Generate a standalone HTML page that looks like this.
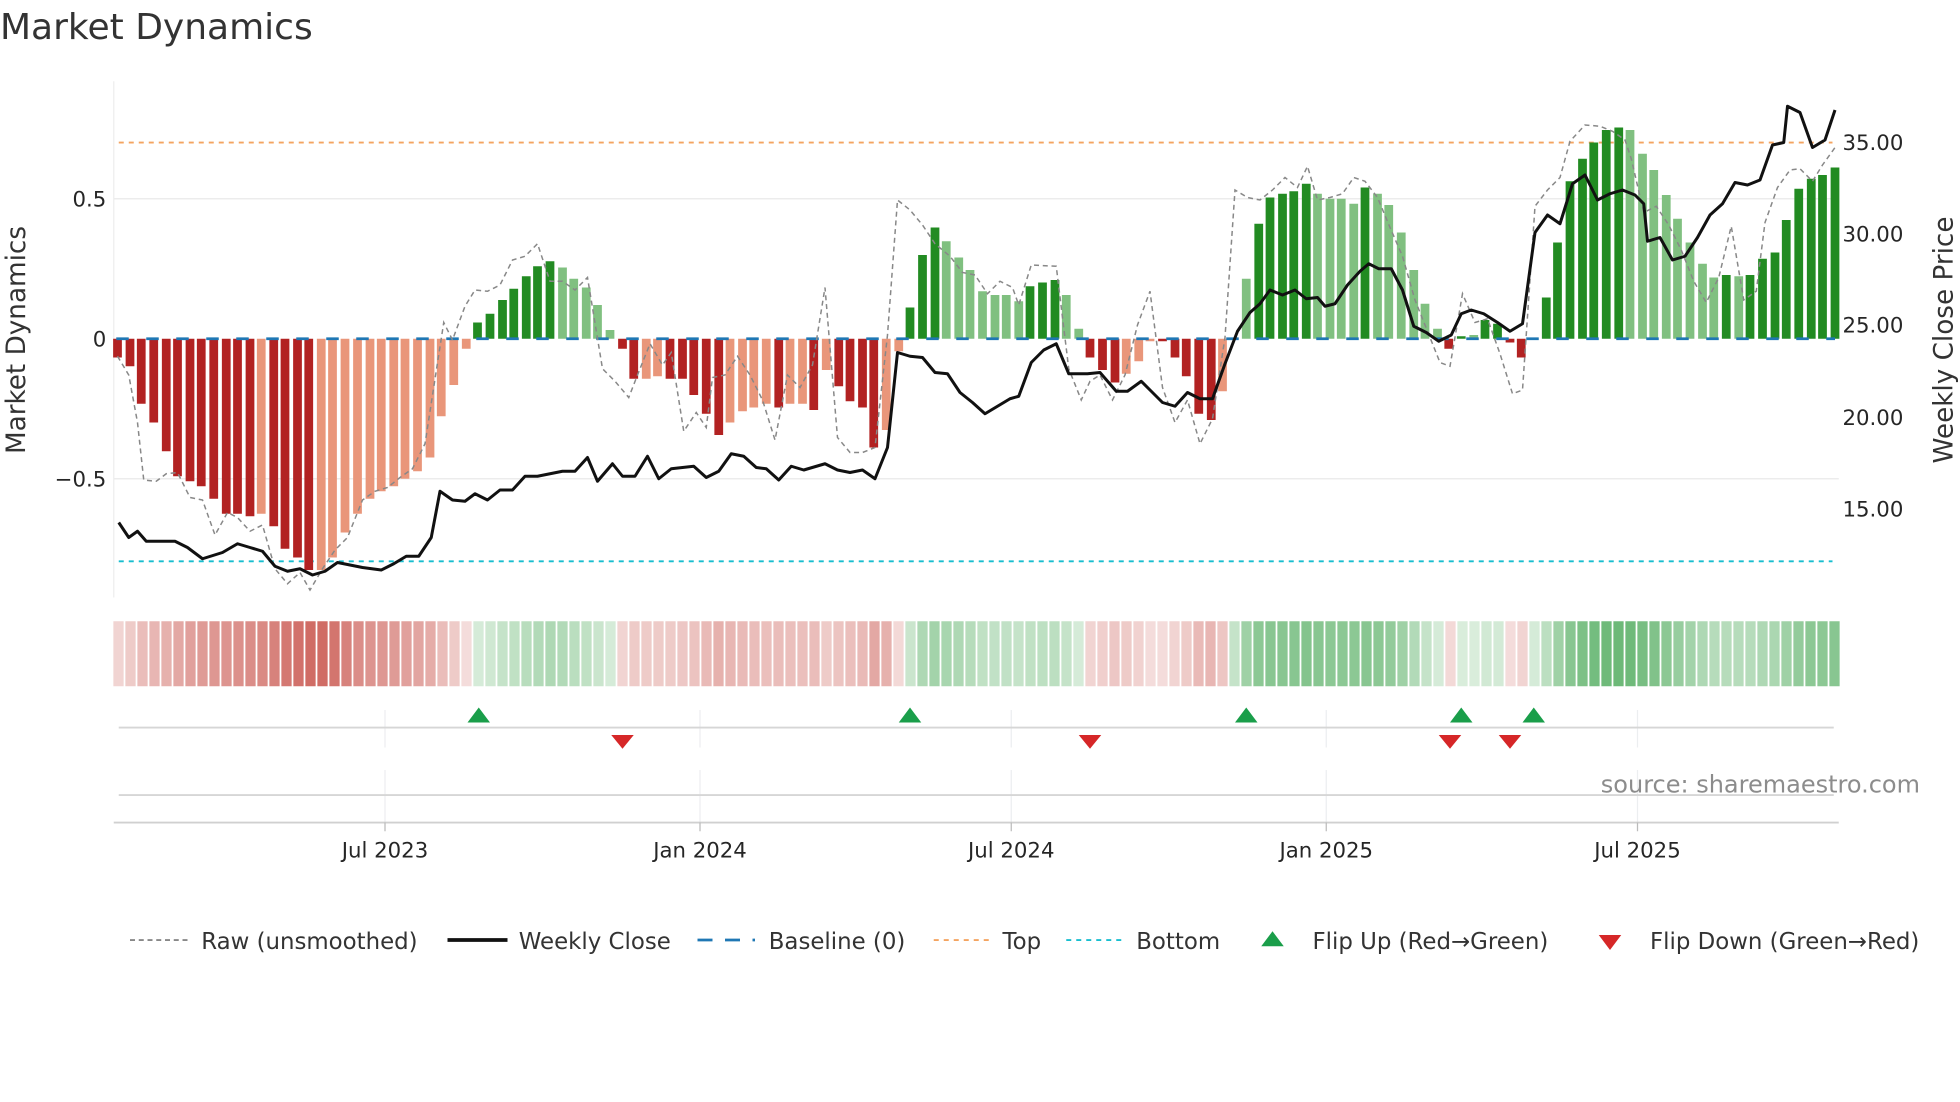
<!DOCTYPE html>
<html><head><meta charset="utf-8"><style>
html,body{margin:0;padding:0;background:#fff;}
svg{display:block;font-family:"DejaVu Sans","Liberation Sans",sans-serif;}
.dr{fill:#b22222}.lr{fill:#e9967a}.dg{fill:#228b22}.lg{fill:#80c080}
.hr{fill:#c8524a}.hg{fill:#3fa34d}
.t{fill:#262626;font-size:17px}
</style></head><body>
<svg width="1960" height="1102" viewBox="0 0 1568 881.6" xmlns="http://www.w3.org/2000/svg">
<text x="0" y="31" style="font-size:28.8px;fill:#333">Market Dynamics</text>
<line x1="91" y1="65" x2="91" y2="478" stroke="#eee" stroke-width="1"/>
<line x1="91" y1="159" x2="1471" y2="159" stroke="#ececec" stroke-width="1.2"/>
<line x1="91" y1="383" x2="1471" y2="383" stroke="#ececec" stroke-width="1.2"/>
<text class="t" x="85" y="165" text-anchor="end">0.5</text>
<text class="t" x="85" y="277" text-anchor="end">0</text>
<text class="t" x="85" y="389" text-anchor="end">−0.5</text>
<text class="t" x="1474" y="120">35.00</text>
<text class="t" x="1474" y="193">30.00</text>
<text class="t" x="1474" y="266">25.00</text>
<text class="t" x="1474" y="340">20.00</text>
<text class="t" x="1474" y="413">15.00</text>
<text transform="translate(20,272) rotate(-90)" text-anchor="middle" style="font-size:21px;fill:#333">Market Dynamics</text>
<text transform="translate(1562,272) rotate(-90)" text-anchor="middle" style="font-size:21px;fill:#333">Weekly Close Price</text>
<line x1="95" y1="114" x2="1466" y2="114" stroke="#f4a460" stroke-width="1.5" stroke-dasharray="4,4"/>
<line x1="95" y1="449" x2="1466" y2="449" stroke="#17becf" stroke-width="1.5" stroke-dasharray="4,4"/>
<g id="bars">
<rect class="dr" x="90.5" y="271" width="7" height="15"/><rect class="dr" x="100.5" y="271" width="7" height="22"/><rect class="dr" x="109.5" y="271" width="7" height="52"/><rect class="dr" x="119.5" y="271" width="7" height="67"/><rect class="dr" x="129.5" y="271" width="7" height="90"/><rect class="dr" x="138.5" y="271" width="7" height="110"/><rect class="dr" x="148.5" y="271" width="7" height="114"/><rect class="dr" x="157.5" y="271" width="7" height="118"/><rect class="dr" x="167.5" y="271" width="7" height="128"/><rect class="dr" x="177.5" y="271" width="7" height="140"/><rect class="dr" x="186.5" y="271" width="7" height="140"/><rect class="dr" x="196.5" y="271" width="7" height="142"/><rect class="lr" x="205.5" y="271" width="7" height="140"/><rect class="dr" x="215.5" y="271" width="7" height="150"/><rect class="dr" x="224.5" y="271" width="7" height="168"/><rect class="dr" x="234.5" y="271" width="7" height="175"/><rect class="dr" x="243.5" y="271" width="7" height="185"/><rect class="lr" x="253.5" y="271" width="7" height="185"/><rect class="lr" x="262.5" y="271" width="7" height="175"/><rect class="lr" x="272.5" y="271" width="7" height="155"/><rect class="lr" x="282.5" y="271" width="7" height="140"/><rect class="lr" x="292.5" y="271" width="7" height="128"/><rect class="lr" x="301.5" y="271" width="7" height="122"/><rect class="lr" x="311.5" y="271" width="7" height="118"/><rect class="lr" x="320.5" y="271" width="7" height="112"/><rect class="lr" x="330.5" y="271" width="7" height="106"/><rect class="lr" x="340.5" y="271" width="7" height="95"/><rect class="lr" x="349.5" y="271" width="7" height="62"/><rect class="lr" x="359.5" y="271" width="7" height="37"/><rect class="lr" x="369.5" y="271" width="7" height="8"/>
<rect class="dg" x="378.5" y="258" width="7" height="13"/><rect class="dg" x="388.5" y="251" width="7" height="20"/><rect class="dg" x="398.5" y="240" width="7" height="31"/><rect class="dg" x="407.5" y="231" width="7" height="40"/><rect class="dg" x="417.5" y="221" width="7" height="50"/><rect class="dg" x="426.5" y="213" width="7" height="58"/><rect class="dg" x="436.5" y="209" width="7" height="62"/><rect class="lg" x="446.5" y="214" width="7" height="57"/><rect class="lg" x="455.5" y="223" width="7" height="48"/><rect class="lg" x="465.5" y="230" width="7" height="41"/><rect class="lg" x="474.5" y="244" width="7" height="27"/><rect class="lg" x="484.5" y="264" width="7" height="7"/>
<rect class="dr" x="494.5" y="271" width="7" height="8"/><rect class="dr" x="503.5" y="271" width="7" height="32"/><rect class="lr" x="513.5" y="271" width="7" height="32"/><rect class="lr" x="522.5" y="271" width="7" height="30"/><rect class="dr" x="532.5" y="271" width="7" height="32"/><rect class="dr" x="542.5" y="271" width="7" height="32"/><rect class="dr" x="551.5" y="271" width="7" height="45"/><rect class="dr" x="561.5" y="271" width="7" height="60"/><rect class="dr" x="571.5" y="271" width="7" height="77"/><rect class="lr" x="580.5" y="271" width="7" height="67"/><rect class="lr" x="590.5" y="271" width="7" height="58"/><rect class="lr" x="599.5" y="271" width="7" height="55"/><rect class="lr" x="609.5" y="271" width="7" height="52"/><rect class="dr" x="619.5" y="271" width="7" height="55"/><rect class="lr" x="628.5" y="271" width="7" height="52"/><rect class="lr" x="638.5" y="271" width="7" height="52"/><rect class="dr" x="647.5" y="271" width="7" height="57"/><rect class="lr" x="657.5" y="271" width="7" height="25"/><rect class="dr" x="667.5" y="271" width="7" height="38"/><rect class="dr" x="676.5" y="271" width="7" height="50"/><rect class="dr" x="686.5" y="271" width="7" height="55"/><rect class="dr" x="695.5" y="271" width="7" height="87"/><rect class="lr" x="705.5" y="271" width="7" height="73"/><rect class="lr" x="715.5" y="271" width="7" height="10"/>
<rect class="dg" x="724.5" y="246" width="7" height="25"/><rect class="dg" x="734.5" y="204" width="7" height="67"/><rect class="dg" x="744.5" y="182" width="7" height="89"/><rect class="lg" x="753.5" y="193" width="7" height="78"/><rect class="lg" x="763.5" y="206" width="7" height="65"/><rect class="lg" x="772.5" y="216" width="7" height="55"/><rect class="lg" x="782.5" y="233" width="7" height="38"/><rect class="lg" x="792.5" y="236" width="7" height="35"/><rect class="lg" x="801.5" y="236" width="7" height="35"/><rect class="lg" x="811.5" y="241" width="7" height="30"/><rect class="dg" x="820.5" y="229" width="7" height="42"/><rect class="dg" x="830.5" y="226" width="7" height="45"/><rect class="dg" x="840.5" y="224" width="7" height="47"/><rect class="lg" x="849.5" y="236" width="7" height="35"/><rect class="lg" x="859.5" y="263" width="7" height="8"/>
<rect class="dr" x="868.5" y="271" width="7" height="15"/><rect class="dr" x="878.5" y="271" width="7" height="25"/><rect class="dr" x="888.5" y="271" width="7" height="35"/><rect class="lr" x="897.5" y="271" width="7" height="28"/><rect class="lr" x="907.5" y="271" width="7" height="18"/><rect class="lr" x="916.5" y="271" width="7" height="2"/><rect class="dr" x="926.5" y="271" width="7" height="2"/><rect class="dr" x="936.5" y="271" width="7" height="15"/><rect class="dr" x="945.5" y="271" width="7" height="30"/><rect class="dr" x="955.5" y="271" width="7" height="60"/><rect class="dr" x="965.5" y="271" width="7" height="65"/><rect class="lr" x="974.5" y="271" width="7" height="42"/>
<rect class="lg" x="993.5" y="223" width="7" height="48"/><rect class="dg" x="1003.5" y="179" width="7" height="92"/><rect class="dg" x="1012.5" y="158" width="7" height="113"/><rect class="dg" x="1022.5" y="155" width="7" height="116"/><rect class="dg" x="1031.5" y="153" width="7" height="118"/><rect class="dg" x="1041.5" y="147" width="7" height="124"/><rect class="lg" x="1050.5" y="155" width="7" height="116"/><rect class="lg" x="1060.5" y="159" width="7" height="112"/><rect class="lg" x="1069.5" y="159" width="7" height="112"/><rect class="lg" x="1079.5" y="163" width="7" height="108"/><rect class="dg" x="1088.5" y="150" width="7" height="121"/><rect class="lg" x="1098.5" y="155" width="7" height="116"/><rect class="lg" x="1107.5" y="164" width="7" height="107"/><rect class="lg" x="1117.5" y="186" width="7" height="85"/><rect class="lg" x="1127.5" y="216" width="7" height="55"/><rect class="lg" x="1136.5" y="243" width="7" height="28"/><rect class="lg" x="1146.5" y="263" width="7" height="8"/><rect class="dr" x="1155.5" y="271" width="7" height="8"/><rect class="dg" x="1165.5" y="269" width="7" height="2"/><rect class="lg" x="1175.5" y="268" width="7" height="3"/><rect class="dg" x="1184.5" y="256" width="7" height="15"/><rect class="dg" x="1194.5" y="259" width="7" height="12"/><rect class="dr" x="1204.5" y="271" width="7" height="3"/><rect class="dr" x="1213.5" y="271" width="7" height="15"/>
<rect class="dg" x="1233.5" y="238" width="7" height="33"/><rect class="dg" x="1242.5" y="194" width="7" height="77"/><rect class="dg" x="1252.5" y="145" width="7" height="126"/><rect class="dg" x="1262.5" y="127" width="7" height="144"/><rect class="dg" x="1271.5" y="114" width="7" height="157"/><rect class="dg" x="1281.5" y="104" width="7" height="167"/><rect class="dg" x="1291.5" y="102" width="7" height="169"/><rect class="lg" x="1300.5" y="104" width="7" height="167"/><rect class="lg" x="1310.5" y="123" width="7" height="148"/><rect class="lg" x="1319.5" y="136" width="7" height="135"/><rect class="lg" x="1329.5" y="156" width="7" height="115"/><rect class="lg" x="1338.5" y="175" width="7" height="96"/><rect class="lg" x="1348.5" y="194" width="7" height="77"/><rect class="lg" x="1358.5" y="211" width="7" height="60"/><rect class="lg" x="1367.5" y="222" width="7" height="49"/><rect class="dg" x="1377.5" y="220" width="7" height="51"/><rect class="lg" x="1387.5" y="221" width="7" height="50"/><rect class="dg" x="1396.5" y="220" width="7" height="51"/><rect class="dg" x="1406.5" y="207" width="7" height="64"/><rect class="dg" x="1416.5" y="202" width="7" height="69"/><rect class="dg" x="1425.5" y="176" width="7" height="95"/><rect class="dg" x="1435.5" y="151" width="7" height="120"/><rect class="dg" x="1445.5" y="143" width="7" height="128"/><rect class="dg" x="1454.5" y="140" width="7" height="131"/><rect class="dg" x="1464.5" y="134" width="7" height="137"/>
</g>
<line x1="93" y1="271" x2="1468" y2="271" stroke="#1f77b4" stroke-width="2.2" stroke-dasharray="10,14"/>
<polyline fill="none" stroke="#888" stroke-width="1.2" stroke-dasharray="4,3" points="94,285 103,300 110,338 115,384 125,385 133,379 142,378 152,398 162,400 172,428 182,410 190,414 200,425 210,420 220,455 230,467 240,458 248,472 258,455 268,440 278,430 290,400 300,393 310,390 320,382 330,375 340,355 355,258 362,272 372,245 380,232 390,233 400,228 410,208 420,205 430,195 440,225 450,225 460,232 470,222 482,295 492,305 503,318 510,300 520,275 530,292 537,282 547,345 557,330 565,342 570,302 580,300 590,285 600,300 610,320 620,352 630,300 640,310 650,292 660,230 670,350 680,362 690,362 700,358 710,268 718,160 728,168 738,180 748,195 760,205 770,218 780,220 790,235 800,225 810,230 815,244 825,212 845,213 855,295 865,320 872,305 880,300 890,320 900,300 910,260 920,233 930,310 940,338 950,320 960,355 970,335 980,270 988,152 998,158 1008,160 1018,152 1028,142 1038,150 1046,133 1054,160 1064,158 1074,155 1083,142 1092,145 1102,158 1112,182 1122,205 1132,240 1142,265 1152,290 1160,293 1170,235 1180,258 1190,255 1200,283 1210,315 1218,312 1228,165 1238,152 1248,142 1256,113 1268,100 1280,101 1290,105 1300,112 1305,127 1315,170 1325,165 1335,180 1345,200 1355,225 1365,242 1375,222 1385,181 1395,240 1405,233 1412,178 1422,150 1432,136 1440,135 1450,145 1458,132 1468,118"/>
<polyline fill="none" stroke="#111" stroke-width="2.4" stroke-linejoin="round" points="95,418 103,430 110,425 117,433 125,433 140,433 150,438 162,447 178,442 190,435 200,438 210,441 220,453 230,457 240,455 250,460 260,457 270,450 280,452 290,454 305,456 315,451 325,445 335,445 345,430 352,393 362,400 372,401 380,395 390,400 400,392 410,392 420,381 430,381 440,379 450,377 460,377 470,366 478,385 490,371 498,381 508,381 518,365 527,383 537,375 555,373 565,382 575,377 585,363 595,365 605,374 613,375 623,384 633,373 643,376 660,371 670,376 680,378 690,376 700,383 710,358 718,282 728,285 738,286 748,298 758,299 768,314 778,322 788,331 798,325 808,319 815,317 825,290 835,280 845,275 855,299 870,299 880,298 893,313 902,313 913,305 920,312 930,322 940,325 950,314 960,319 970,319 980,291 990,265 1000,250 1008,243 1016,232 1026,236 1036,232 1045,239 1054,238 1060,245 1068,243 1078,228 1088,217 1095,211 1103,215 1113,215 1122,232 1131,261 1141,266 1151,273 1161,268 1169,251 1177,248 1187,251 1198,258 1208,265 1218,259 1228,186 1238,172 1248,179 1258,147 1268,140 1278,160 1288,155 1298,152 1308,156 1315,163 1318,193 1328,190 1338,208 1348,205 1358,190 1368,172 1378,163 1388,146 1398,148 1408,144 1418,116 1427,114 1430,85 1440,90 1450,118 1460,112 1468,88"/>
<g>
<rect class="hr" fill-opacity="0.25" x="90.7" y="497" width="8.2" height="52"/><rect class="hr" fill-opacity="0.3" x="100.3" y="497" width="8.2" height="52"/><rect class="hr" fill-opacity="0.38" x="109.9" y="497" width="8.2" height="52"/><rect class="hr" fill-opacity="0.42" x="119.5" y="497" width="8.2" height="52"/><rect class="hr" fill-opacity="0.45" x="129.1" y="497" width="8.2" height="52"/><rect class="hr" fill-opacity="0.5" x="138.7" y="497" width="8.2" height="52"/><rect class="hr" fill-opacity="0.55" x="148.3" y="497" width="8.2" height="52"/><rect class="hr" fill-opacity="0.58" x="157.9" y="497" width="8.2" height="52"/><rect class="hr" fill-opacity="0.6" x="167.5" y="497" width="8.2" height="52"/><rect class="hr" fill-opacity="0.62" x="177.1" y="497" width="8.2" height="52"/><rect class="hr" fill-opacity="0.64" x="186.7" y="497" width="8.2" height="52"/><rect class="hr" fill-opacity="0.66" x="196.3" y="497" width="8.2" height="52"/><rect class="hr" fill-opacity="0.68" x="205.9" y="497" width="8.2" height="52"/><rect class="hr" fill-opacity="0.72" x="215.5" y="497" width="8.2" height="52"/><rect class="hr" fill-opacity="0.78" x="225.1" y="497" width="8.2" height="52"/><rect class="hr" fill-opacity="0.82" x="234.7" y="497" width="8.2" height="52"/><rect class="hr" fill-opacity="0.85" x="244.3" y="497" width="8.2" height="52"/><rect class="hr" fill-opacity="0.85" x="253.9" y="497" width="8.2" height="52"/><rect class="hr" fill-opacity="0.8" x="263.5" y="497" width="8.2" height="52"/><rect class="hr" fill-opacity="0.72" x="273.1" y="497" width="8.2" height="52"/><rect class="hr" fill-opacity="0.66" x="282.7" y="497" width="8.2" height="52"/><rect class="hr" fill-opacity="0.62" x="292.3" y="497" width="8.2" height="52"/><rect class="hr" fill-opacity="0.6" x="301.9" y="497" width="8.2" height="52"/><rect class="hr" fill-opacity="0.58" x="311.5" y="497" width="8.2" height="52"/><rect class="hr" fill-opacity="0.55" x="321.1" y="497" width="8.2" height="52"/><rect class="hr" fill-opacity="0.52" x="330.7" y="497" width="8.2" height="52"/><rect class="hr" fill-opacity="0.48" x="340.3" y="497" width="8.2" height="52"/><rect class="hr" fill-opacity="0.38" x="349.9" y="497" width="8.2" height="52"/><rect class="hr" fill-opacity="0.3" x="359.5" y="497" width="8.2" height="52"/><rect class="hr" fill-opacity="0.2" x="369.1" y="497" width="8.2" height="52"/>
<rect class="hg" fill-opacity="0.22" x="378.7" y="497" width="8.2" height="52"/><rect class="hg" fill-opacity="0.25" x="388.3" y="497" width="8.2" height="52"/><rect class="hg" fill-opacity="0.3" x="397.9" y="497" width="8.2" height="52"/><rect class="hg" fill-opacity="0.33" x="407.5" y="497" width="8.2" height="52"/><rect class="hg" fill-opacity="0.37" x="417.1" y="497" width="8.2" height="52"/><rect class="hg" fill-opacity="0.4" x="426.7" y="497" width="8.2" height="52"/><rect class="hg" fill-opacity="0.42" x="436.3" y="497" width="8.2" height="52"/><rect class="hg" fill-opacity="0.4" x="445.9" y="497" width="8.2" height="52"/><rect class="hg" fill-opacity="0.36" x="455.5" y="497" width="8.2" height="52"/><rect class="hg" fill-opacity="0.33" x="465.1" y="497" width="8.2" height="52"/><rect class="hg" fill-opacity="0.28" x="474.7" y="497" width="8.2" height="52"/><rect class="hg" fill-opacity="0.22" x="484.3" y="497" width="8.2" height="52"/>
<rect class="hr" fill-opacity="0.25" x="493.9" y="497" width="8.2" height="52"/><rect class="hr" fill-opacity="0.3" x="503.5" y="497" width="8.2" height="52"/><rect class="hr" fill-opacity="0.3" x="513.1" y="497" width="8.2" height="52"/><rect class="hr" fill-opacity="0.3" x="522.7" y="497" width="8.2" height="52"/><rect class="hr" fill-opacity="0.3" x="532.3" y="497" width="8.2" height="52"/><rect class="hr" fill-opacity="0.32" x="541.9" y="497" width="8.2" height="52"/><rect class="hr" fill-opacity="0.35" x="551.5" y="497" width="8.2" height="52"/><rect class="hr" fill-opacity="0.4" x="561.1" y="497" width="8.2" height="52"/><rect class="hr" fill-opacity="0.45" x="570.7" y="497" width="8.2" height="52"/><rect class="hr" fill-opacity="0.42" x="580.3" y="497" width="8.2" height="52"/><rect class="hr" fill-opacity="0.4" x="589.9" y="497" width="8.2" height="52"/><rect class="hr" fill-opacity="0.38" x="599.5" y="497" width="8.2" height="52"/><rect class="hr" fill-opacity="0.37" x="609.1" y="497" width="8.2" height="52"/><rect class="hr" fill-opacity="0.38" x="618.7" y="497" width="8.2" height="52"/><rect class="hr" fill-opacity="0.37" x="628.3" y="497" width="8.2" height="52"/><rect class="hr" fill-opacity="0.37" x="637.9" y="497" width="8.2" height="52"/><rect class="hr" fill-opacity="0.38" x="647.5" y="497" width="8.2" height="52"/><rect class="hr" fill-opacity="0.3" x="657.1" y="497" width="8.2" height="52"/><rect class="hr" fill-opacity="0.34" x="666.7" y="497" width="8.2" height="52"/><rect class="hr" fill-opacity="0.37" x="676.3" y="497" width="8.2" height="52"/><rect class="hr" fill-opacity="0.4" x="685.9" y="497" width="8.2" height="52"/><rect class="hr" fill-opacity="0.5" x="695.5" y="497" width="8.2" height="52"/><rect class="hr" fill-opacity="0.45" x="705.1" y="497" width="8.2" height="52"/><rect class="hr" fill-opacity="0.22" x="714.7" y="497" width="8.2" height="52"/>
<rect class="hg" fill-opacity="0.28" x="724.3" y="497" width="8.2" height="52"/><rect class="hg" fill-opacity="0.42" x="733.9" y="497" width="8.2" height="52"/><rect class="hg" fill-opacity="0.48" x="743.5" y="497" width="8.2" height="52"/><rect class="hg" fill-opacity="0.45" x="753.1" y="497" width="8.2" height="52"/><rect class="hg" fill-opacity="0.42" x="762.7" y="497" width="8.2" height="52"/><rect class="hg" fill-opacity="0.38" x="772.3" y="497" width="8.2" height="52"/><rect class="hg" fill-opacity="0.33" x="781.9" y="497" width="8.2" height="52"/><rect class="hg" fill-opacity="0.32" x="791.5" y="497" width="8.2" height="52"/><rect class="hg" fill-opacity="0.32" x="801.1" y="497" width="8.2" height="52"/><rect class="hg" fill-opacity="0.3" x="810.7" y="497" width="8.2" height="52"/><rect class="hg" fill-opacity="0.33" x="820.3" y="497" width="8.2" height="52"/><rect class="hg" fill-opacity="0.34" x="829.9" y="497" width="8.2" height="52"/><rect class="hg" fill-opacity="0.35" x="839.5" y="497" width="8.2" height="52"/><rect class="hg" fill-opacity="0.3" x="849.1" y="497" width="8.2" height="52"/><rect class="hg" fill-opacity="0.22" x="858.7" y="497" width="8.2" height="52"/>
<rect class="hr" fill-opacity="0.25" x="868.3" y="497" width="8.2" height="52"/><rect class="hr" fill-opacity="0.28" x="877.9" y="497" width="8.2" height="52"/><rect class="hr" fill-opacity="0.32" x="887.5" y="497" width="8.2" height="52"/><rect class="hr" fill-opacity="0.3" x="897.1" y="497" width="8.2" height="52"/><rect class="hr" fill-opacity="0.26" x="906.7" y="497" width="8.2" height="52"/><rect class="hr" fill-opacity="0.2" x="916.3" y="497" width="8.2" height="52"/><rect class="hr" fill-opacity="0.2" x="925.9" y="497" width="8.2" height="52"/><rect class="hr" fill-opacity="0.25" x="935.5" y="497" width="8.2" height="52"/><rect class="hr" fill-opacity="0.3" x="945.1" y="497" width="8.2" height="52"/><rect class="hr" fill-opacity="0.4" x="954.7" y="497" width="8.2" height="52"/><rect class="hr" fill-opacity="0.42" x="964.3" y="497" width="8.2" height="52"/><rect class="hr" fill-opacity="0.33" x="973.9" y="497" width="8.2" height="52"/>
<rect class="hg" fill-opacity="0.3" x="983.5" y="497" width="8.2" height="52"/><rect class="hg" fill-opacity="0.5" x="993.1" y="497" width="8.2" height="52"/><rect class="hg" fill-opacity="0.6" x="1002.7" y="497" width="8.2" height="52"/><rect class="hg" fill-opacity="0.62" x="1012.3" y="497" width="8.2" height="52"/><rect class="hg" fill-opacity="0.62" x="1021.9" y="497" width="8.2" height="52"/><rect class="hg" fill-opacity="0.62" x="1031.5" y="497" width="8.2" height="52"/><rect class="hg" fill-opacity="0.64" x="1041.1" y="497" width="8.2" height="52"/><rect class="hg" fill-opacity="0.62" x="1050.7" y="497" width="8.2" height="52"/><rect class="hg" fill-opacity="0.6" x="1060.3" y="497" width="8.2" height="52"/><rect class="hg" fill-opacity="0.6" x="1069.9" y="497" width="8.2" height="52"/><rect class="hg" fill-opacity="0.6" x="1079.5" y="497" width="8.2" height="52"/><rect class="hg" fill-opacity="0.62" x="1089.1" y="497" width="8.2" height="52"/><rect class="hg" fill-opacity="0.6" x="1098.7" y="497" width="8.2" height="52"/><rect class="hg" fill-opacity="0.56" x="1108.3" y="497" width="8.2" height="52"/><rect class="hg" fill-opacity="0.5" x="1117.9" y="497" width="8.2" height="52"/><rect class="hg" fill-opacity="0.4" x="1127.5" y="497" width="8.2" height="52"/><rect class="hg" fill-opacity="0.3" x="1137.1" y="497" width="8.2" height="52"/><rect class="hg" fill-opacity="0.22" x="1146.7" y="497" width="8.2" height="52"/><rect class="hr" fill-opacity="0.22" x="1156.3" y="497" width="8.2" height="52"/><rect class="hg" fill-opacity="0.2" x="1165.9" y="497" width="8.2" height="52"/><rect class="hg" fill-opacity="0.2" x="1175.5" y="497" width="8.2" height="52"/><rect class="hg" fill-opacity="0.24" x="1185.1" y="497" width="8.2" height="52"/><rect class="hg" fill-opacity="0.23" x="1194.7" y="497" width="8.2" height="52"/><rect class="hr" fill-opacity="0.2" x="1204.3" y="497" width="8.2" height="52"/><rect class="hr" fill-opacity="0.25" x="1213.9" y="497" width="8.2" height="52"/><rect class="hg" fill-opacity="0.22" x="1223.5" y="497" width="8.2" height="52"/><rect class="hg" fill-opacity="0.35" x="1233.1" y="497" width="8.2" height="52"/><rect class="hg" fill-opacity="0.5" x="1242.7" y="497" width="8.2" height="52"/><rect class="hg" fill-opacity="0.62" x="1252.3" y="497" width="8.2" height="52"/><rect class="hg" fill-opacity="0.68" x="1261.9" y="497" width="8.2" height="52"/><rect class="hg" fill-opacity="0.72" x="1271.5" y="497" width="8.2" height="52"/><rect class="hg" fill-opacity="0.75" x="1281.1" y="497" width="8.2" height="52"/><rect class="hg" fill-opacity="0.76" x="1290.7" y="497" width="8.2" height="52"/><rect class="hg" fill-opacity="0.75" x="1300.3" y="497" width="8.2" height="52"/><rect class="hg" fill-opacity="0.7" x="1309.9" y="497" width="8.2" height="52"/><rect class="hg" fill-opacity="0.66" x="1319.5" y="497" width="8.2" height="52"/><rect class="hg" fill-opacity="0.6" x="1329.1" y="497" width="8.2" height="52"/><rect class="hg" fill-opacity="0.54" x="1338.7" y="497" width="8.2" height="52"/><rect class="hg" fill-opacity="0.48" x="1348.3" y="497" width="8.2" height="52"/><rect class="hg" fill-opacity="0.42" x="1357.9" y="497" width="8.2" height="52"/><rect class="hg" fill-opacity="0.38" x="1367.5" y="497" width="8.2" height="52"/><rect class="hg" fill-opacity="0.38" x="1377.1" y="497" width="8.2" height="52"/><rect class="hg" fill-opacity="0.38" x="1386.7" y="497" width="8.2" height="52"/><rect class="hg" fill-opacity="0.38" x="1396.3" y="497" width="8.2" height="52"/><rect class="hg" fill-opacity="0.42" x="1405.9" y="497" width="8.2" height="52"/><rect class="hg" fill-opacity="0.44" x="1415.5" y="497" width="8.2" height="52"/><rect class="hg" fill-opacity="0.5" x="1425.1" y="497" width="8.2" height="52"/><rect class="hg" fill-opacity="0.56" x="1434.7" y="497" width="8.2" height="52"/><rect class="hg" fill-opacity="0.6" x="1444.3" y="497" width="8.2" height="52"/><rect class="hg" fill-opacity="0.6" x="1453.9" y="497" width="8.2" height="52"/><rect class="hg" fill-opacity="0.62" x="1463.5" y="497" width="8.2" height="52"/>
</g>
<g stroke="#eceef0" stroke-width="1">
<line x1="308" y1="568" x2="308" y2="598"/><line x1="560" y1="568" x2="560" y2="598"/><line x1="809" y1="568" x2="809" y2="598"/><line x1="1061" y1="568" x2="1061" y2="598"/><line x1="1310" y1="568" x2="1310" y2="598"/>
<line x1="308" y1="616" x2="308" y2="658"/><line x1="560" y1="616" x2="560" y2="658"/><line x1="809" y1="616" x2="809" y2="658"/><line x1="1061" y1="616" x2="1061" y2="658"/><line x1="1310" y1="616" x2="1310" y2="658"/>
</g>
<line x1="95" y1="582" x2="1467" y2="582" stroke="#d6d6d6" stroke-width="1.5"/>
<line x1="95" y1="636" x2="1467" y2="636" stroke="#d6d6d6" stroke-width="1.5"/>
<line x1="91" y1="658" x2="1471" y2="658" stroke="#d0d0d0" stroke-width="1.5"/>
<g stroke="#bbb" stroke-width="1"><line x1="308" y1="658" x2="308" y2="665"/><line x1="560" y1="658" x2="560" y2="665"/><line x1="809" y1="658" x2="809" y2="665"/><line x1="1061" y1="658" x2="1061" y2="665"/><line x1="1310" y1="658" x2="1310" y2="665"/></g>
<g fill="#1a9e4a">
<polygon points="383,566 392,578 374,578"/><polygon points="728,566 737,578 719,578"/><polygon points="997,566 1006,578 988,578"/><polygon points="1169,566 1178,578 1160,578"/><polygon points="1227,566 1236,578 1218,578"/>
</g>
<g fill="#d62728">
<polygon points="489,588 507,588 498,599"/><polygon points="863,588 881,588 872,599"/><polygon points="1151,588 1169,588 1160,599"/><polygon points="1199,588 1217,588 1208,599"/>
</g>
<text x="1536" y="634" text-anchor="end" style="font-size:19.2px;fill:#8c8c8c">source: sharemaestro.com</text>
<text class="t" x="308" y="686" text-anchor="middle">Jul 2023</text>
<text class="t" x="560" y="686" text-anchor="middle">Jan 2024</text>
<text class="t" x="809" y="686" text-anchor="middle">Jul 2024</text>
<text class="t" x="1061" y="686" text-anchor="middle">Jan 2025</text>
<text class="t" x="1310" y="686" text-anchor="middle">Jul 2025</text>
<g style="font-size:18.3px;fill:#333">
<line x1="104" y1="752" x2="150" y2="752" stroke="#888" stroke-width="1.5" stroke-dasharray="4,3"/>
<text x="161" y="759">Raw (unsmoothed)</text>
<line x1="358" y1="752" x2="406" y2="752" stroke="#111" stroke-width="3"/>
<text x="415" y="759">Weekly Close</text>
<line x1="558" y1="752" x2="604" y2="752" stroke="#1f77b4" stroke-width="2.2" stroke-dasharray="12,10"/>
<text x="615" y="759">Baseline (0)</text>
<line x1="747" y1="752" x2="792" y2="752" stroke="#f4a460" stroke-width="1.5" stroke-dasharray="4,4"/>
<text x="802" y="759">Top</text>
<line x1="853" y1="752" x2="898" y2="752" stroke="#17becf" stroke-width="1.5" stroke-dasharray="4,4"/>
<text x="909" y="759">Bottom</text>
<polygon points="1018,745 1027,757 1009,757" fill="#1a9e4a"/>
<text x="1050" y="759">Flip Up (Red→Green)</text>
<polygon points="1279,748 1297,748 1288,760" fill="#d62728"/>
<text x="1320" y="759">Flip Down (Green→Red)</text>
</g>
</svg>
</body></html>
